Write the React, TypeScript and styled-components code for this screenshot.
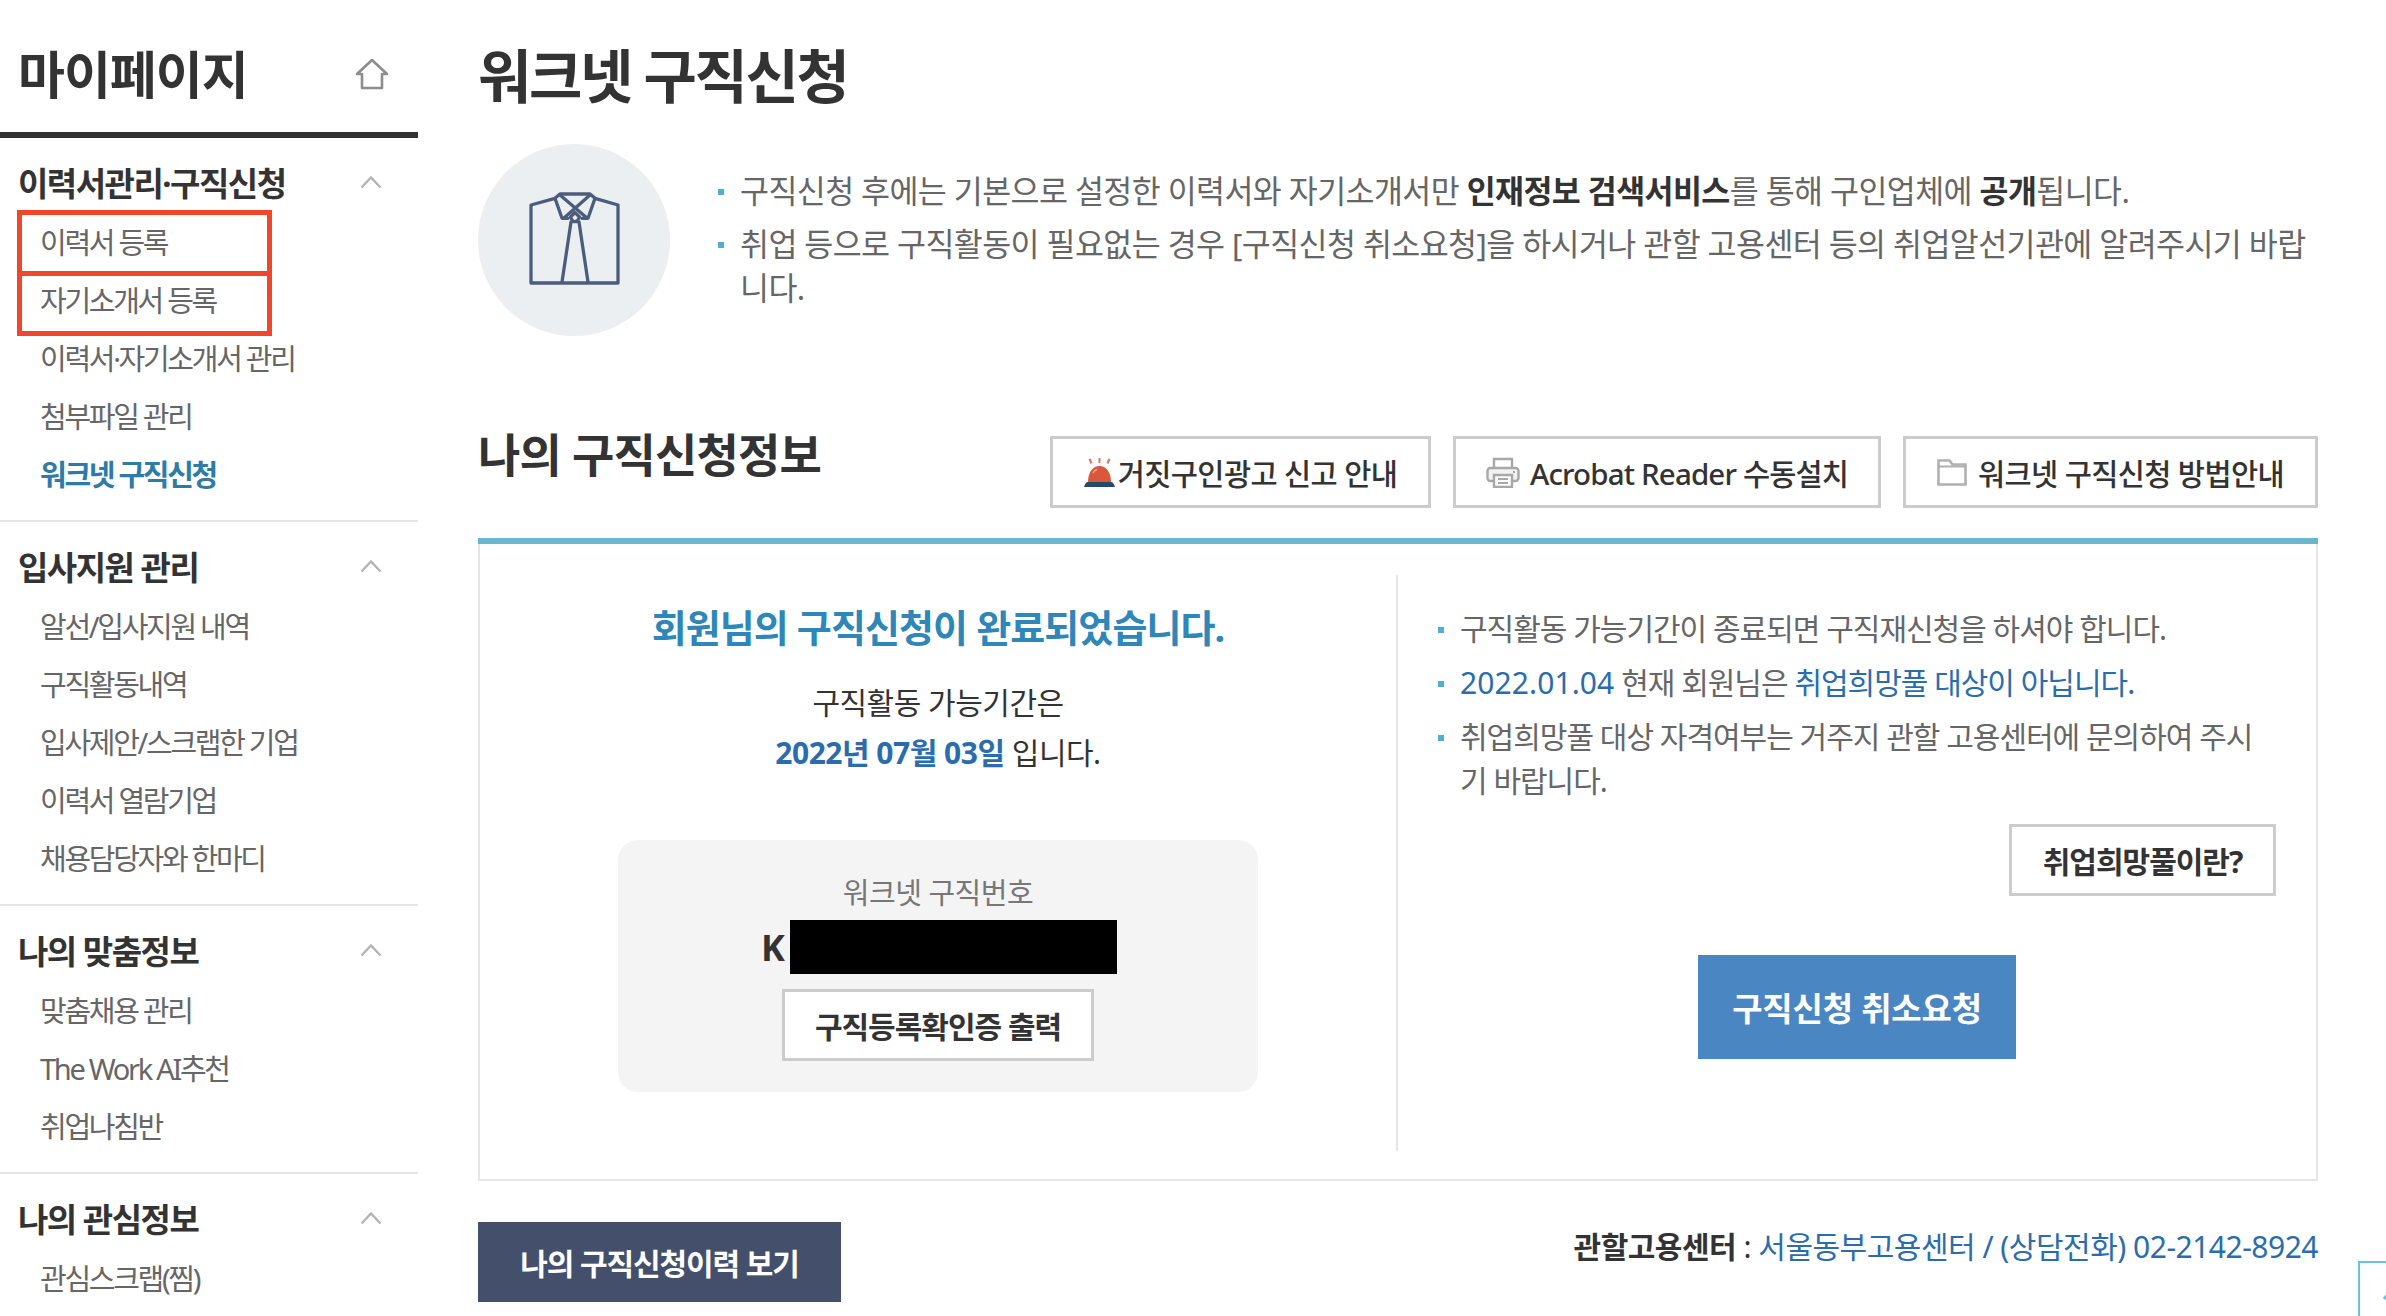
import React from "react";
import styled, { createGlobalStyle } from "styled-components";

const Global = createGlobalStyle`
  html, body { margin: 0; padding: 0; height: 1316px; overflow: hidden; background: #fff; }
  body { font-family: "Noto Sans", "Noto Sans CJK KR", sans-serif; color: #333; }
  * { box-sizing: border-box; }
  ul { list-style: none; margin: 0; padding: 0; }
  p, h1, h2, h3 { margin: 0; }
`;

const Page = styled.div`
  display: flex;
  width: 2386px;
  height: 1316px;
  overflow: hidden;
  position: relative;
`;

const Sidebar = styled.aside`
  width: 418px;
  margin-right: 60px;
  flex: none;
`;

const SideHeader = styled.div`
  height: 138px;
  border-bottom: 6px solid #333;
  display: flex;
  align-items: center;
  justify-content: space-between;
  padding: 16px 29px 0 18px;
`;

const SideTitle = styled.h2`
  font-size: 51px;
  font-weight: 700;
  letter-spacing: -1px;
  line-height: 1;
  color: #333;
`;

const Section = styled.section`
  padding: 15px 0 17px;
  border-bottom: 2px solid #e6e6e6;
  &:last-child { border-bottom: 0; }
`;

const SectionHead = styled.div`
  height: 60px;
  display: flex;
  align-items: center;
  justify-content: space-between;
  padding: 0 36px 3px 18px;
`;

const SectionTitle = styled.h3`
  font-size: 33px;
  font-weight: 700;
  letter-spacing: -1.5px;
  color: #333;
`;

const SideList = styled.ul`
  position: relative;
`;

const SideItem = styled.li<{ $active?: boolean }>`
  height: 58px;
  line-height: 59px;
  padding-left: 40px;
  font-size: 29px;
  letter-spacing: -2.3px;
  font-weight: ${(p) => (p.$active ? 700 : 400)};
  color: ${(p) => (p.$active ? "#2f7ba6" : "#666")};
`;

const Annotation = styled.div<{ $top: number; $height: number }>`
  position: absolute;
  left: 17px;
  width: 255px;
  top: ${(p) => p.$top}px;
  height: ${(p) => p.$height}px;
  border: 5px solid #f0462a;
`;

const Main = styled.main`
  width: 1840px;
  flex: none;
`;

const PageTitle = styled.h1`
  height: 144px;
  padding-top: 33px;
  font-size: 58px;
  font-weight: 700;
  letter-spacing: -2.4px;
  line-height: 86px;
  color: #333;
`;

const Intro = styled.div`
  display: flex;
  height: 192px;
  gap: 48px;
`;

const Circle = styled.div`
  width: 192px;
  height: 192px;
  border-radius: 50%;
  background: #eceff2;
  display: flex;
  align-items: center;
  justify-content: center;
  padding-bottom: 3px;
  flex: none;
`;

const IntroList = styled.ul`
  padding-top: 25px;
  flex: 1;
`;

const Bullet = styled.li<{ $gap?: number; $large?: boolean }>`
  position: relative;
  padding-left: 22px;
  margin-bottom: ${(p) => p.$gap ?? 0}px;
  font-size: ${(p) => (p.$large ? 31.5 : 30)}px;
  line-height: 44px;
  letter-spacing: ${(p) => (p.$large ? -0.6 : -1)}px;
  color: #666;
  &::before {
    content: "";
    position: absolute;
    left: 0;
    top: 20px;
    width: 6px;
    height: 6px;
    background: #4faed4;
  }
`;

const Strong = styled.strong`
  color: #333;
  font-weight: 700;
`;

const SectionRow = styled.div`
  display: flex;
  justify-content: space-between;
  align-items: flex-start;
  margin-top: 100px;
  height: 72px;
`;

const SubTitle = styled.h2`
  font-size: 46px;
  font-weight: 700;
  letter-spacing: -0.85px;
  line-height: 36px;
  color: #333;
`;

const Tools = styled.div`
  display: flex;
  gap: 22px;
`;

const ToolButton = styled.button<{ $w: number; $gap: number; $tight?: boolean }>`
  width: ${(p) => p.$w}px;
  height: 72px;
  display: flex;
  align-items: center;
  justify-content: center;
  gap: ${(p) => p.$gap}px;
  background: #fff;
  border: 3px solid #ccc;
  font-family: inherit;
  font-size: 29.5px;
  font-weight: 500;
  letter-spacing: ${(p) => (p.$tight ? -0.85 : -0.6)}px;
  color: #333;
  padding: 0;
`;

const Panel = styled.div`
  margin-top: 30px;
  height: 643px;
  border: 2px solid #e6e6e6;
  border-top: 0;
  position: relative;
  display: grid;
  grid-template-columns: 918px 1fr;
  padding-top: 37px;
  &::before {
    content: "";
    position: absolute;
    left: -2px;
    right: -2px;
    top: 0;
    height: 6px;
    background: #6cb4d2;
  }
`;

const LeftCol = styled.div`
  height: 576px;
  border-right: 2px solid #e6e6e6;
  display: flex;
  flex-direction: column;
  align-items: center;
`;

const Done = styled.p`
  font-size: 38px;
  font-weight: 700;
  letter-spacing: -0.9px;
  line-height: 50px;
  margin-top: 27px;
  color: #2f86b8;
`;

const Period = styled.p`
  font-size: 30px;
  line-height: 50px;
  letter-spacing: -0.5px;
  color: #333;
  text-align: center;
`;

const PeriodTop = styled(Period)`
  margin-top: 26px;
`;

const DateText = styled.b`
  color: #2b6cad;
  font-weight: 700;
`;

const NumberBox = styled.div`
  margin-top: 62px;
  width: 640px;
  height: 252px;
  background: #f4f4f4;
  border-radius: 20px;
  display: flex;
  flex-direction: column;
  align-items: center;
  padding-top: 33px;
`;

const NumberLabel = styled.p`
  font-size: 29px;
  line-height: 40px;
  letter-spacing: -0.5px;
  color: #777;
`;

const NumberRow = styled.div`
  display: flex;
  align-items: center;
  align-self: flex-start;
  height: 54px;
  margin: 7px 0 15px 143px;
  gap: 5px;
`;

const NumberK = styled.span`
  font-size: 36px;
  font-weight: 700;
  color: #333;
`;

const Redacted = styled.span`
  width: 327px;
  height: 54px;
  background: #000;
`;

const OutlineButton = styled.button<{ $w: number }>`
  width: ${(p) => p.$w}px;
  height: 72px;
  background: #fff;
  border: 3px solid #ccc;
  font-family: inherit;
  font-size: 30px;
  font-weight: 700;
  letter-spacing: -1px;
  color: #333;
  padding: 0;
`;

const RightCol = styled.div`
  padding: 32px 40px 0 40px;
  display: flex;
  flex-direction: column;
`;

const RightList = styled.ul``;

const LinkText = styled.span`
  color: #2b6cad;
`;

const DateLink = styled(LinkText)`
  letter-spacing: 0.1px;
`;

const HopeRow = styled.div`
  display: flex;
  justify-content: flex-end;
  margin-top: 21px;
`;

const CancelButton = styled.button`
  align-self: center;
  margin: 59px 0 0 0;
  width: 318px;
  height: 104px;
  background: #4a86c2;
  border: 0;
  color: #fff;
  font-family: inherit;
  font-size: 33px;
  font-weight: 700;
  letter-spacing: -0.2px;
`;

const Footer = styled.div`
  display: flex;
  justify-content: space-between;
  align-items: flex-start;
  margin-top: 41px;
`;

const DarkButton = styled.button`
  width: 363px;
  height: 80px;
  background: #44506b;
  border: 0;
  color: #fff;
  font-family: inherit;
  font-size: 30px;
  font-weight: 700;
  letter-spacing: -1.1px;
`;

const Office = styled.p`
  font-size: 30px;
  line-height: 50px;
  letter-spacing: -0.5px;
  color: #333;
`;

const TopButton = styled.div`
  position: absolute;
  left: 2358px;
  top: 1261px;
  width: 60px;
  height: 60px;
  border: 2px solid #6cc0e0;
  background: #fff;
  display: flex;
  justify-content: flex-start;
  padding: 24px 0 0 22px;
`;

const Chevron = () => (
  <svg width="22" height="14" viewBox="0 0 22 14" fill="none" stroke="#b4b4b4" strokeWidth="2.4">
    <path d="M1.5 12.5 11 2.5l9.5 10" />
  </svg>
);

const HomeIcon = () => (
  <svg width="34" height="32" viewBox="0 0 34 32" fill="none" stroke="#8d8d8d" strokeWidth="2.6" strokeLinejoin="round">
    <path d="M2 16 17 2l15 14h-5v14H7V16H2Z" />
  </svg>
);

const ShirtIcon = () => (
  <svg width="91" height="93" viewBox="-2 -2 91 93" fill="none" stroke="#4c5d7c" strokeWidth="3.300" strokeLinejoin="round" strokeLinecap="round">
    <path d="M0 11 24 4.300 29 0h30l5 4.300L87 11v78H0V11Z" />
    <path d="M24 4.300 31 24.300h6M64 4.300 57 24.300h-6" />
    <path d="M29 1 56 24M59 1 33 24" />
    <path d="M44 18.500 48.500 23 46 27.500h-4L39.500 23 44 18.500Z" />
    <path d="M40 28 31 88M48 28l9 60" />
  </svg>
);

const AlarmIcon = () => (
  <svg width="31" height="29" viewBox="0 0 31 29">
    <path d="M4 24C4 14 9 8 15.500 8S27 14 27 24H4Z" fill="#d9583c" />
    <path d="M9 15c1-2 2-3 4-3.500" fill="none" stroke="#f0a08c" strokeWidth="1.500" />
    <path d="M0 29c1-3 2-5 4-5h23c2 0 3 2 4 5H0Z" fill="#244a68" />
    <path d="M14.500 0h2v5h-2zM4.500 1l2.200-.5L8.500 5 6.500 6zM26.500 1l-2.200-.5L22.500 5l2 1z" fill="#dd7a60" />
  </svg>
);

const PrinterIcon = () => (
  <svg width="34" height="31" viewBox="0 0 34 31" fill="#fff" stroke="#a8a8a8" strokeWidth="2.400">
    <path d="M8 11V2h18v9" />
    <rect x="1.500" y="11" width="31" height="13" rx="3" fill="#f2f2f2" />
    <path d="M8 18h18v12H8z" />
    <path d="M12 22h10M12 26h10" strokeWidth="2" />
    <path d="M27 15h2" strokeWidth="2" />
  </svg>
);

const FolderIcon = () => (
  <svg width="30" height="27" viewBox="0 0 30 27" fill="#fff" stroke="#b0b0b0" strokeWidth="2.600">
    <path d="M1.500 25.500V1.500h11l3 4h13v20H1.500Z" />
    <path d="M1.500 7.500h27" strokeWidth="2" />
  </svg>
);

const ArrowUp = () => (
  <svg width="20" height="14" viewBox="0 0 20 14" fill="none" stroke="#6cc0e0" strokeWidth="3">
    <path d="M2 12 10 3l8 9" />
  </svg>
);

const menu = [
  { title: "이력서관리·구직신청", items: ["이력서 등록", "자기소개서 등록", "이력서·자기소개서 관리", "첨부파일 관리", "워크넷 구직신청"], active: 4 },
  { title: "입사지원 관리", items: ["알선/입사지원 내역", "구직활동내역", "입사제안/스크랩한 기업", "이력서 열람기업", "채용담당자와 한마디"] },
  { title: "나의 맞춤정보", items: ["맞춤채용 관리", "The Work AI추천", "취업나침반"] },
  { title: "나의 관심정보", items: ["관심스크랩(찜)"] },
];

export default function App() {
  return (
    <Page>
      <Global />
      <Sidebar>
        <SideHeader>
          <SideTitle>마이페이지</SideTitle>
          <HomeIcon />
        </SideHeader>
        {menu.map((s, si) => (
          <Section key={s.title}>
            <SectionHead>
              <SectionTitle>{s.title}</SectionTitle>
              <Chevron />
            </SectionHead>
            <SideList>
              {s.items.map((it, i) => (
                <SideItem key={it} $active={s.active === i}>{it}</SideItem>
              ))}
              {si === 0 && (
                <>
                  <Annotation $top={-3} $height={66} />
                  <Annotation $top={58} $height={65} />
                </>
              )}
            </SideList>
          </Section>
        ))}
      </Sidebar>
      <Main>
        <PageTitle>워크넷 구직신청</PageTitle>
        <Intro>
          <Circle><ShirtIcon /></Circle>
          <IntroList>
            <Bullet $large $gap={9}>구직신청 후에는 기본으로 설정한 이력서와 자기소개서만 <Strong>인재정보 검색서비스</Strong>를 통해 구인업체에 <Strong>공개</Strong>됩니다.</Bullet>
            <Bullet $large>취업 등으로 구직활동이 필요없는 경우 [구직신청 취소요청]을 하시거나 관할 고용센터 등의 취업알선기관에 알려주시기 바랍니다.</Bullet>
          </IntroList>
        </Intro>
        <SectionRow>
          <SubTitle>나의 구직신청정보</SubTitle>
          <Tools>
            <ToolButton $w={381} $gap={3}><AlarmIcon />거짓구인광고 신고 안내</ToolButton>
            <ToolButton $w={428} $gap={10} $tight><PrinterIcon />Acrobat Reader 수동설치</ToolButton>
            <ToolButton $w={415} $gap={11}><FolderIcon />워크넷 구직신청 방법안내</ToolButton>
          </Tools>
        </SectionRow>
        <Panel>
          <LeftCol>
            <Done>회원님의 구직신청이 완료되었습니다.</Done>
            <PeriodTop>구직활동 가능기간은</PeriodTop>
            <Period><DateText>2022년 07월 03일</DateText> 입니다.</Period>
            <NumberBox>
              <NumberLabel>워크넷 구직번호</NumberLabel>
              <NumberRow>
                <NumberK>K</NumberK>
                <Redacted />
              </NumberRow>
              <OutlineButton $w={312}>구직등록확인증 출력</OutlineButton>
            </NumberBox>
          </LeftCol>
          <RightCol>
            <RightList>
              <Bullet $gap={10}>구직활동 가능기간이 종료되면 구직재신청을 하셔야 합니다.</Bullet>
              <Bullet $gap={10}><DateLink>2022.01.04</DateLink> 현재 회원님은 <LinkText>취업희망풀 대상이 아닙니다.</LinkText></Bullet>
              <Bullet>취업희망풀 대상 자격여부는 거주지 관할 고용센터에 문의하여 주시기 바랍니다.</Bullet>
            </RightList>
            <HopeRow><OutlineButton $w={267}>취업희망풀이란?</OutlineButton></HopeRow>
            <CancelButton>구직신청 취소요청</CancelButton>
          </RightCol>
        </Panel>
        <Footer>
          <DarkButton>나의 구직신청이력 보기</DarkButton>
          <Office><Strong>관할고용센터</Strong> : <LinkText>서울동부고용센터 / (상담전화) 02-2142-8924</LinkText></Office>
        </Footer>
      </Main>
      <TopButton><ArrowUp /></TopButton>
    </Page>
  );
}
